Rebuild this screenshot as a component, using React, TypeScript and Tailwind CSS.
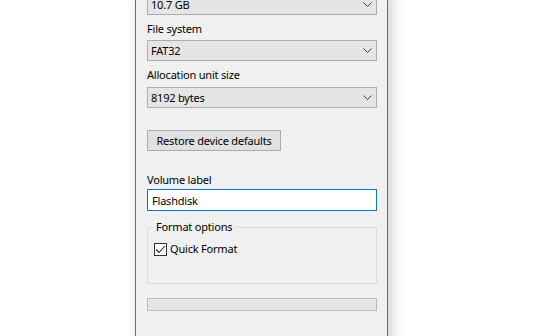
import React from 'react';

const font = { fontFamily: '"Noto Sans", sans-serif' };

interface ComboProps {
  value: string;
  className?: string;
}

/** Windows 10 style combobox with a thin chevron */
const Combo: React.FC<ComboProps> = ({ value, className = '' }) => (
  <div
    className={`flex h-[21px] w-[230px] items-center justify-between border border-[#acacac] bg-[#e5e5e5] pl-[3px] pr-[4px] ${className}`}
  >
    <span className="leading-none text-black">{value}</span>
    <svg width="9" height="5" viewBox="0 0 9 5" aria-hidden="true">
      <polyline points="0.5,0.5 4.5,4.5 8.5,0.5" fill="none" stroke="#3c3c3c" strokeWidth="1" />
    </svg>
  </div>
);

const Label: React.FC<{ text: string; className?: string }> = ({ text, className = '' }) => (
  <div className={`h-[16px] leading-[16px] text-black ${className}`}>{text}</div>
);

export default function App() {
  return (
    <div
      className="h-[336px] w-[538px] overflow-hidden bg-white pl-[135px] text-[11px] tracking-[-0.2px]"
      style={font}
    >
      <div className="-mt-[6px] h-[360px] w-[253px] border-x border-[#1883d7] bg-[#f0f0f0] pl-[11px] shadow-[3px_0_12px_rgba(0,0,0,0.22)]">
        {/* Capacity */}
        <Combo value="10.7 GB" />

        {/* File system */}
        <Label text="File system" className="mt-[6px]" />
        <Combo value="FAT32" className="mt-[3px]" />

        {/* Allocation unit size */}
        <Label text="Allocation unit size" className="mt-[6px]" />
        <Combo value="8192 bytes" className="mt-[4px]" />

        <button
          type="button"
          className="mt-[22px] flex h-[21px] w-[134px] items-center justify-center border border-[#adadad] bg-[#e1e1e1] leading-none text-black"
        >
          Restore device defaults
        </button>

        {/* Volume label */}
        <Label text="Volume label" className="mt-[21px]" />
        <div className="mt-[1px] flex h-[22px] w-[230px] items-center border border-[#0078d7] bg-white pl-[4px] leading-none text-black">
          Flashdisk
        </div>

        {/* Format options group */}
        <div className="relative mt-[16px] h-[57px] w-[230px] border border-[#dcdcdc]">
          <span className="absolute -top-[9px] left-[6px] bg-[#f0f0f0] px-[2px] leading-[16px] text-black">
            Format options
          </span>
          <div className="ml-[6px] mt-[13px] flex items-center gap-[3px]">
            <div className="flex h-[13px] w-[13px] items-center justify-center border border-[#333333] bg-white">
              <svg width="11" height="9" viewBox="0 0 11 9" aria-hidden="true">
                <polyline points="1,4.5 4,7.5 10,1" fill="none" stroke="#222222" strokeWidth="1.1" />
              </svg>
            </div>
            <span className="leading-[16px] text-black">Quick Format</span>
          </div>
        </div>

        {/* Progress bar */}
        <div className="mt-[14px] h-[13px] w-[230px] border border-[#bcbcbc] bg-[#e6e6e6]" />
      </div>
    </div>
  );
}
